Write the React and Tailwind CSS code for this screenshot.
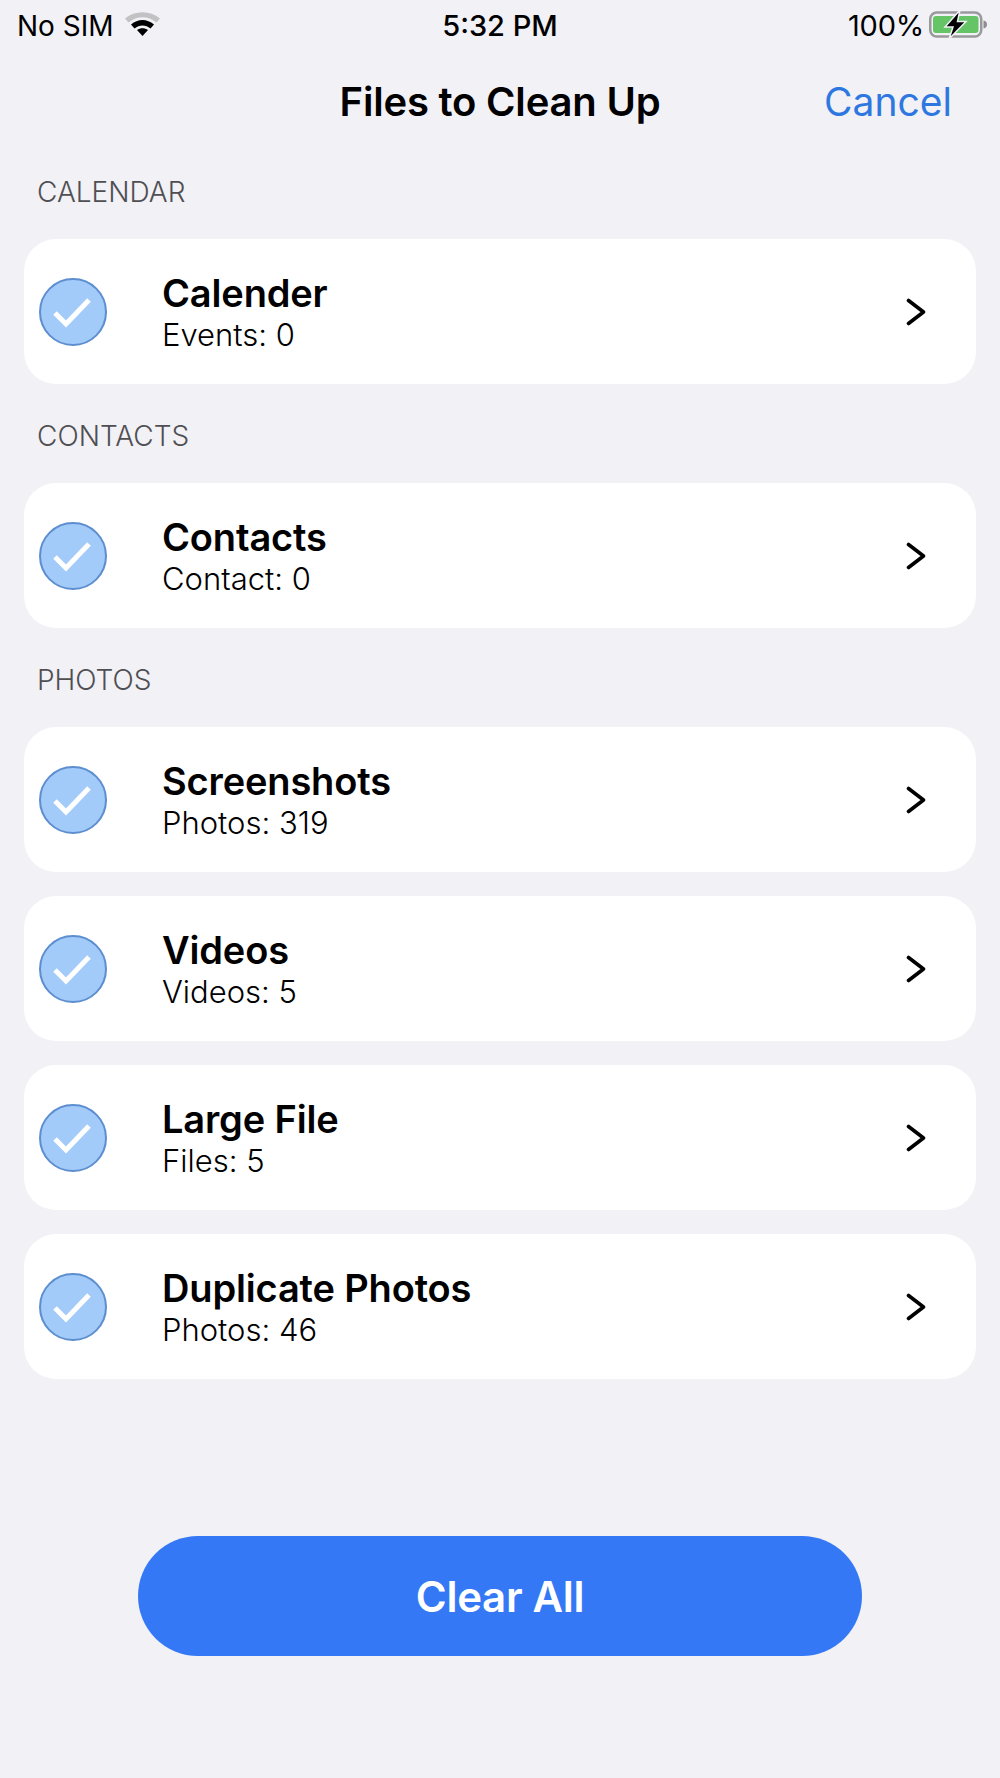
const sections = [
  { title: "CALENDAR", rows: [{ name: "Calender", sub: "Events: 0" }] },
  { title: "CONTACTS", rows: [{ name: "Contacts", sub: "Contact: 0" }] },
  {
    title: "PHOTOS",
    rows: [
      { name: "Screenshots", sub: "Photos: 319" },
      { name: "Videos", sub: "Videos: 5" },
      { name: "Large File", sub: "Files: 5" },
      { name: "Duplicate Photos", sub: "Photos: 46" },
    ],
  },
];

export default function App() {
  return (
    <div className="h-[1778px] w-full bg-[#f1f1f6] font-['Inter',sans-serif] text-black">
      <StatusBar />

      {/* Nav */}
      <div className="relative flex h-[124px] items-start justify-center pt-[25px]">
        <span className="text-[40px] font-semibold leading-[50px] tracking-[-0.2px]">Files to Clean Up</span>
        <span className="absolute right-[48px] top-[25px] text-[39px] leading-[50px] text-[#2f77e0]">Cancel</span>
      </div>

      {/* Sections */}
      <div className="px-[24px]">
        {sections.map((s) => (
          <div key={s.title} className="mb-[36px]">
            <div className="mb-[31px] pl-[13px] text-[28px] font-light leading-[32px] text-[#4f4f53]">{s.title}</div>
            <div className="flex flex-col gap-[24px]">
              {s.rows.map((r) => (
                <Row key={r.name} {...r} />
              ))}
            </div>
          </div>
        ))}
      </div>

      {/* Clear all */}
      <div className="mt-[157px] flex justify-center">
        <button className="h-[120px] w-[724px] rounded-[60px] bg-[#3478f6] text-[42px] font-semibold tracking-[-0.3px] text-white">
          Clear All
        </button>
      </div>
    </div>
  );
}

function StatusBar() {
  return (
    <div className="relative flex h-[52px] items-center justify-between pl-[17px] pr-[12px] text-[28px]">
      <div className="flex items-center gap-[10px]">
        <span>No SIM</span>
        <svg width="37" height="28" viewBox="0 0 37 28" className="-translate-y-[3px]">
          <path d="M1 9.5 C11 1 26 1 36 9.5 L32.5 13.5 C24 6.5 13 6.5 4.5 13.5 Z" fill="#c2c2c4" />
          <path d="M7 15.5 C14 9.5 23 9.5 30 15.5 L26.5 19.5 C21.5 15.5 15.5 15.5 10.5 19.5 Z" fill="#000" />
          <path d="M13 21 C16.5 18.5 20.5 18.5 24 21 L18.5 27 Z" fill="#000" />
        </svg>
      </div>
      <span className="absolute left-1/2 -translate-x-1/2 text-[29px] font-medium">5:32 PM</span>
      <div className="flex items-center gap-[4px]">
        <span className="text-[29px] tracking-[-0.2px]">100%</span>
        <svg width="60" height="30" viewBox="0 0 60 30" className="-translate-y-[2px]">
          <rect x="2.25" y="3.5" width="51" height="24" rx="6.5" fill="none" stroke="#9a9a9c" strokeWidth="2.5" />
          <rect x="5" y="7" width="45.5" height="17" rx="3" fill="#65c466" />
          <path d="M55.5 11.5 C58 12 59 13.5 59 15.5 C59 17.5 58 19 55.5 19.5 Z" fill="#8e8e90" />
          <path d="M32 1 L17 18 H25 L21 30 L38 12.5 H29.5 Z" fill="#000" stroke="#f1f1f6" strokeWidth="1.5" />
        </svg>
      </div>
    </div>
  );
}

function Row({ name, sub }) {
  return (
    <div className="flex h-[145px] items-center rounded-[32px] bg-white pl-[15px] pr-[50px]">
      <div className="flex h-[68px] w-[68px] shrink-0 items-center justify-center rounded-full border-2 border-[#5d8ecf] bg-[#a3cbfa]">
        <svg width="40" height="32" viewBox="0 0 40 32" fill="none" className="-translate-x-[1px]">
          <path d="M3 17 L14 28 L37 4" stroke="#fff" strokeWidth="5" />
        </svg>
      </div>
      <div className="ml-[55px] flex-1">
        <div className="text-[38px] font-semibold leading-[44px] tracking-[-0.15px]">{name}</div>
        <div className="mt-[1px] text-[31px] font-light leading-[37px]">{sub}</div>
      </div>
      <svg width="20" height="28" viewBox="0 0 20 28" fill="none">
        <path d="M2.5 2.5 L17.5 14 L2.5 25.5" stroke="#000" strokeWidth="3.6" strokeLinecap="round" strokeLinejoin="round" />
      </svg>
    </div>
  );
}
